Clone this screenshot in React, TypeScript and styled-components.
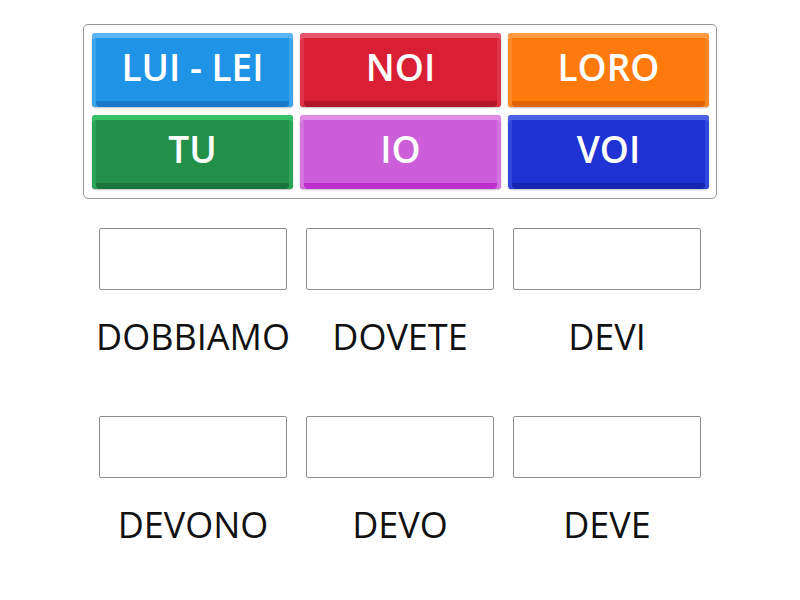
import React from "react";
import styled, { createGlobalStyle } from "styled-components";

const Global = createGlobalStyle`
  html, body { margin: 0; padding: 0; background: #ffffff; }
  body { font-family: "Open Sans", "Liberation Sans", sans-serif; }
`;

const Page = styled.div`
  width: 800px;
  height: 600px;
  display: flex;
  flex-direction: column;
  align-items: center;
  padding-top: 24px;
  box-sizing: border-box;
`;

const Bank = styled.div`
  width: 634px;
  box-sizing: border-box;
  border: 1px solid #9a9a9a;
  border-radius: 5px;
  padding: 8px 8px 9px 8px;
  display: grid;
  grid-template-columns: repeat(3, 201px);
  grid-auto-rows: 74px;
  column-gap: 7px;
  row-gap: 8px;
`;

type TileColors = { face: string; top: string; side: string; bottom: string };

const Tile = styled.div<{ $c: TileColors }>`
  border-radius: 4px;
  background: ${(p) => p.$c.face};
  box-shadow:
    inset 0 5px 0 ${(p) => p.$c.top},
    inset 4px 0 0 ${(p) => p.$c.side},
    inset -4px 0 0 ${(p) => p.$c.side},
    inset 0 -6px 0 ${(p) => p.$c.bottom},
    0 1px 2px rgba(0, 0, 0, 0.25);
  display: flex;
  align-items: center;
  justify-content: center;
  padding-bottom: 7px;
  box-sizing: border-box;
  color: #ffffff;
  font-family: "Open Sans", sans-serif;
  font-weight: 600;
  font-size: 37px;
  user-select: none;
`;

const Targets = styled.div`
  margin-top: 29px;
  width: 621px;
  display: grid;
  grid-template-columns: repeat(3, 207px);
  grid-auto-rows: 188px;
`;

const Slot = styled.div`
  display: flex;
  flex-direction: column;
  align-items: center;
`;

const DropBox = styled.div`
  width: 188px;
  height: 62px;
  box-sizing: border-box;
  border: 1px solid #8f8f8f;
  border-radius: 2px;
  background: #ffffff;
`;

const Label = styled.div`
  margin-top: 26px;
  font-family: "Open Sans", sans-serif;
  font-size: 36px;
  line-height: 42px;
  color: #111111;
  white-space: nowrap;
`;

const tiles: { text: string; c: TileColors }[] = [
  { text: "LUI - LEI", c: { face: "#1f93e6", top: "#5cb6f2", side: "#3aa4ee", bottom: "#1878c9" } },
  { text: "NOI", c: { face: "#d81f33", top: "#e6566a", side: "#de3447", bottom: "#b2172a" } },
  { text: "LORO", c: { face: "#ff7a0c", top: "#ff9a44", side: "#ff8826", bottom: "#e06402" } },
  { text: "TU", c: { face: "#23904a", top: "#36c266", side: "#2aa456", bottom: "#1a743b" } },
  { text: "IO", c: { face: "#cd5ed9", top: "#de8ce6", side: "#d472df", bottom: "#bd2fce" } },
  { text: "VOI", c: { face: "#1f33d4", top: "#4c62e6", side: "#3247dc", bottom: "#1726ae" } },
];

const words = ["DOBBIAMO", "DOVETE", "DEVI", "DEVONO", "DEVO", "DEVE"];

export default function App() {
  return (
    <>
      <Global />
      <Page>
        <Bank>
          {tiles.map((t) => (
            <Tile key={t.text} $c={t.c}>
              {t.text}
            </Tile>
          ))}
        </Bank>
        <Targets>
          {words.map((w) => (
            <Slot key={w}>
              <DropBox />
              <Label>{w}</Label>
            </Slot>
          ))}
        </Targets>
      </Page>
    </>
  );
}
